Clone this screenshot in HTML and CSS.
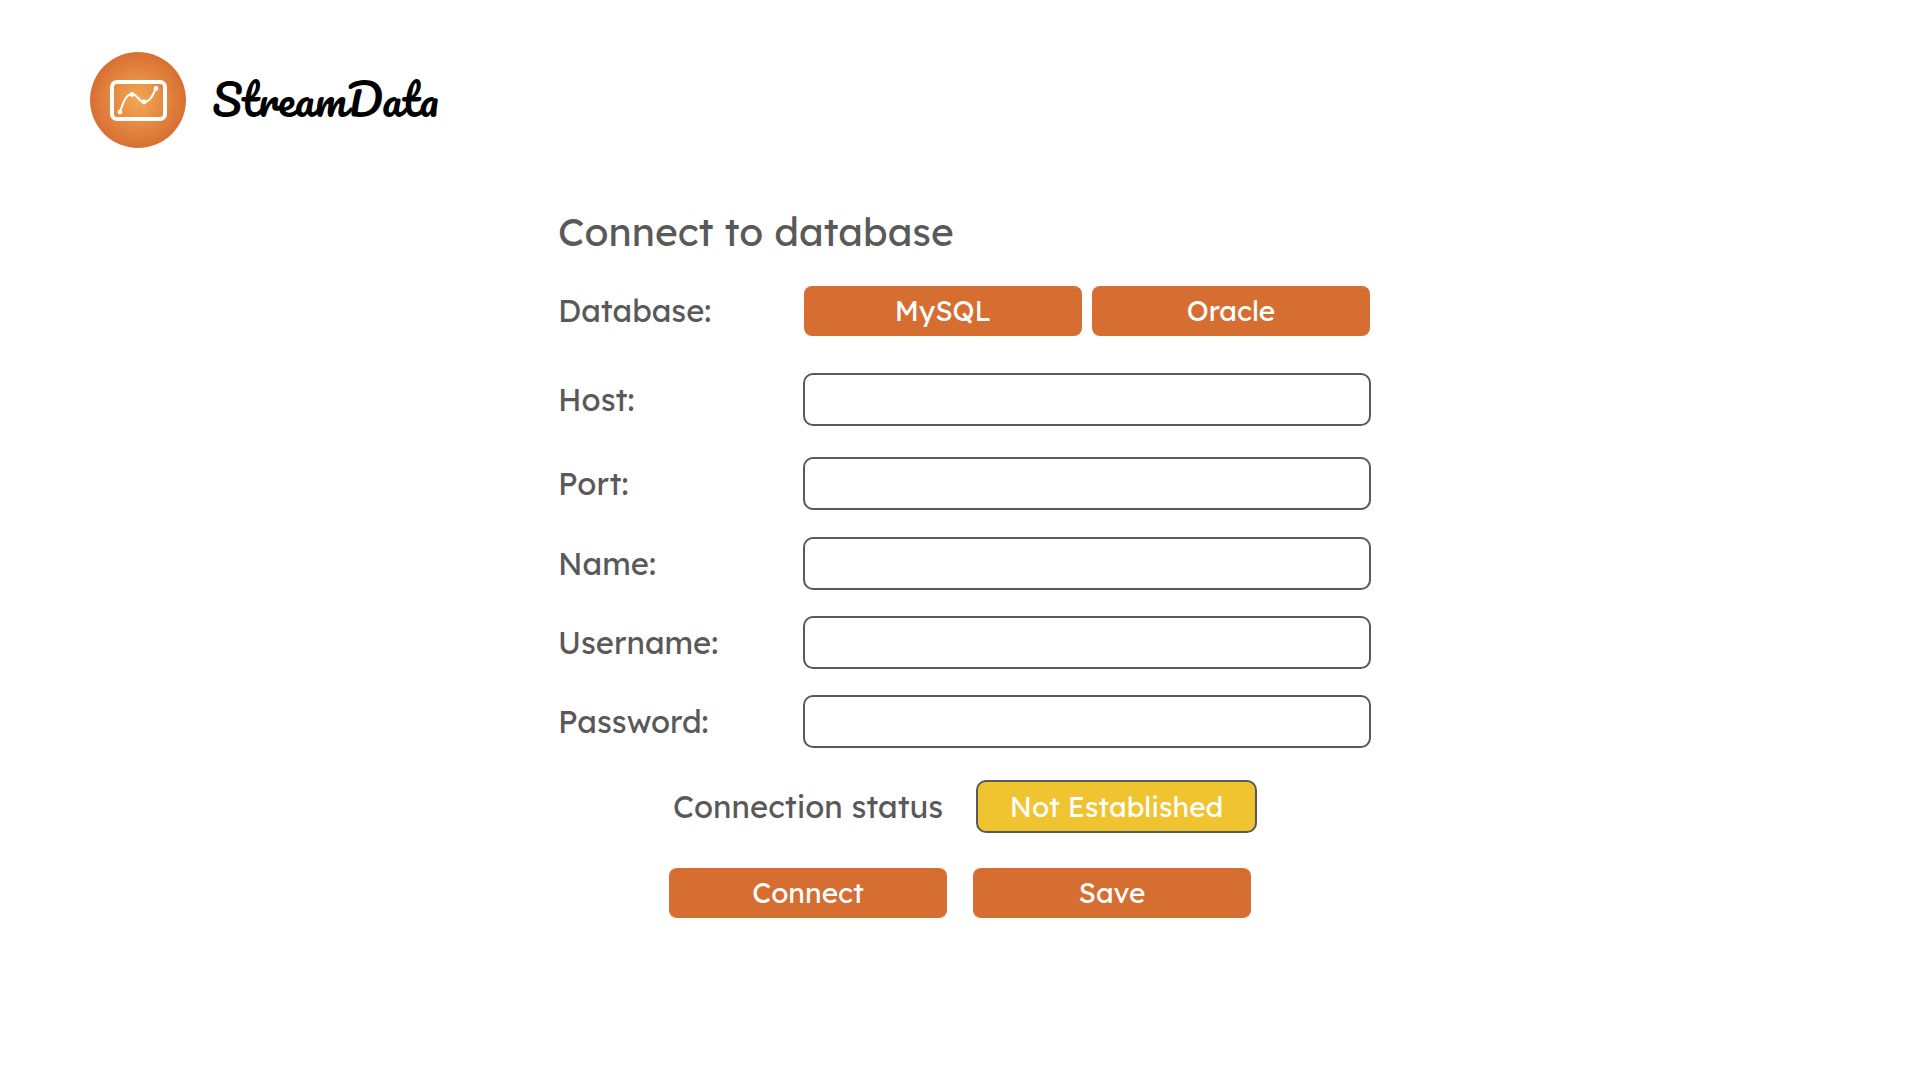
FILE: index.html
```html
<!DOCTYPE html>
<html lang="en">
<head>
<meta charset="utf-8">
<meta name="viewport" content="width=device-width, initial-scale=1">
<title>StreamData</title>
<link rel="stylesheet" href="styles.css">
</head>
<body>
<header class="brand">
  <svg class="brand-mark" viewBox="0 0 96 96" aria-hidden="true">
    <defs>
      <radialGradient id="glow">
        <stop offset="0" stop-color="#f3a853"/>
        <stop offset="1" stop-color="#d86f33"/>
      </radialGradient>
    </defs>
    <circle cx="48" cy="48" r="48" fill="url(#glow)"/>
    <g fill="none" stroke="#fff" stroke-linecap="round">
      <rect x="22" y="30" width="53" height="37" rx="5" stroke-width="4"/>
      <path d="M30 60C33 51 36 42 42 42C47 42 49 50 54 50C60 50 63 43 66 36" stroke-width="2"/>
    </g>
    <g fill="#fff">
      <circle cx="30" cy="60" r="2.4"/>
      <circle cx="42" cy="42.5" r="2.4"/>
      <circle cx="54" cy="50" r="2.4"/>
      <circle cx="66" cy="36.5" r="2.4"/>
    </g>
  </svg>
  <span class="brand-name">StreamData</span>
</header>
<main>
  <form class="connect-form">
    <h1>Connect to database</h1>
    <div class="row database-row">
      <span class="label" id="database-label">Database:</span>
      <div class="choices" role="group" aria-labelledby="database-label">
        <button class="button" type="button">MySQL</button>
        <button class="button" type="button">Oracle</button>
      </div>
    </div>
    <div class="fields server">
      <div class="row"><label class="label" for="host">Host:</label><input class="box" id="host" type="text"></div>
      <div class="row"><label class="label" for="port">Port:</label><input class="box" id="port" type="text"></div>
    </div>
    <div class="fields account">
      <div class="row"><label class="label" for="name">Name:</label><input class="box" id="name" type="text"></div>
      <div class="row"><label class="label" for="username">Username:</label><input class="box" id="username" type="text"></div>
      <div class="row"><label class="label" for="password">Password:</label><input class="box" id="password" type="password"></div>
    </div>
    <div class="status">
      <span class="label">Connection status</span>
      <output class="box status-value">Not Established</output>
    </div>
    <div class="actions">
      <button class="button" type="button">Connect</button>
      <button class="button" type="button">Save</button>
    </div>
  </form>
</main>
</body>
</html>
```
FILE: styles.css
```css
* { box-sizing: border-box; }

body {
  margin: 0;
  background: #fff;
  color: #595959;
  font-family: Lexend, Inter, sans-serif;
}

.brand {
  display: flex;
  align-items: center;
  gap: 26px;
  padding: 52px 90px 0;
}

.brand-mark {
  width: 96px;
  height: 96px;
}

.brand-name {
  padding-bottom: 3px;
  color: #000;
  font: 400 43px/60px Pacifico, Lato, cursive;
}

.connect-form {
  max-width: 822px;
  margin: 60px auto 80px;
  padding-left: 9px;
}

h1 {
  margin: 0 0 30px;
  font-size: 39px;
  font-weight: 400;
  line-height: 48px;
}

.row {
  display: grid;
  grid-template-columns: 245px 1fr;
  align-items: center;
}

.label {
  font-size: 31px;
  line-height: 40px;
}

.choices {
  display: grid;
  grid-template-columns: 1fr 1fr;
  gap: 10px;
  padding: 0 1px;
}

.button {
  height: 50px;
  padding: 0 0 2px;
  border: 0;
  border-radius: 8px;
  background: #d66e31;
  color: #fff;
  font: inherit;
  font-size: 28px;
}

.box {
  width: 100%;
  height: 53px;
  padding: 0 16px;
  border: 2px solid #595959;
  border-radius: 10px;
  background: #fff;
  color: inherit;
  font: inherit;
  font-size: 28px;
}

.fields { display: grid; }

.server {
  gap: 31px;
  margin-top: 37px;
}

.account {
  gap: 26px;
  margin-top: 27px;
}

.status {
  display: grid;
  grid-template-columns: 303px 281px;
  align-items: center;
  margin: 32px 0 0 115px;
}

.status-value {
  display: flex;
  align-items: center;
  justify-content: center;
  background: #f0c331;
  color: #fff;
}

.actions {
  display: grid;
  grid-template-columns: 278px 278px;
  gap: 26px;
  margin: 35px 0 0 111px;
}
```
